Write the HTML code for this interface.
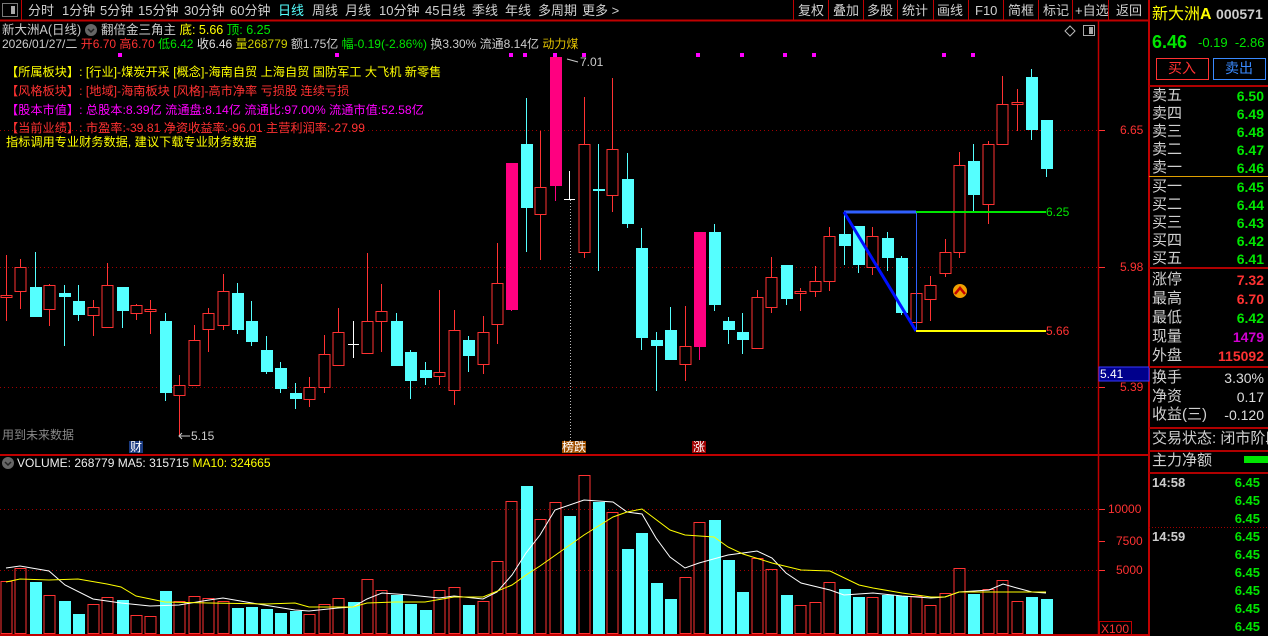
<!DOCTYPE html>
<html><head><meta charset="utf-8"><style>
*{margin:0;padding:0;box-sizing:border-box}
body{width:1268px;height:636px;background:#000;overflow:hidden;position:relative;font-family:"Liberation Sans","Noto Sans CJK SC",sans-serif;color:#c8c8c8}
.a{position:absolute;white-space:nowrap;line-height:1}
.tb{font-size:13px;top:4px;color:#d0d0d0}
.r{color:#ff3232}.g{color:#00e600}.y{color:#ffff00}.m{color:#ff00ff}.w{color:#e0e0e0}.c{color:#55ffff}
.rp{font-size:15px;color:#d0d0d0;left:1152px}
.rv{font-size:14px;font-weight:bold;right:4px;text-align:right}
.hl{position:absolute;left:1149px;width:119px;height:2px;background:#b00000}
</style></head><body>
<svg width="1268" height="636" style="position:absolute;left:0;top:0">
<line x1="0" y1="20.5" x2="1149" y2="20.5" stroke="#c00000" stroke-width="2"/>
<rect x="2.5" y="3.5" width="15" height="13" fill="none" stroke="#777" />
<rect x="11" y="6" width="4" height="8" fill="#aaa"/>
<line x1="21.5" y1="0" x2="21.5" y2="20" stroke="#c00000"/>
<g stroke="#c00000"><line x1="793.5" y1="0" x2="793.5" y2="20"/><line x1="828.5" y1="0" x2="828.5" y2="20"/><line x1="863.5" y1="0" x2="863.5" y2="20"/><line x1="897.5" y1="0" x2="897.5" y2="20"/><line x1="933.5" y1="0" x2="933.5" y2="20"/><line x1="968.5" y1="0" x2="968.5" y2="20"/><line x1="1003.5" y1="0" x2="1003.5" y2="20"/><line x1="1038.5" y1="0" x2="1038.5" y2="20"/><line x1="1072.5" y1="0" x2="1072.5" y2="20"/><line x1="1108.5" y1="0" x2="1108.5" y2="20"/></g>
<line x1="1098.5" y1="20" x2="1098.5" y2="636" stroke="#c00000" stroke-width="1.5"/>
<line x1="1149" y1="0" x2="1149" y2="636" stroke="#c00000" stroke-width="2"/>
<line x1="0" y1="455" x2="1149" y2="455" stroke="#c00000" stroke-width="2"/>
<line x1="0" y1="635" x2="1149" y2="635" stroke="#c00000" stroke-width="2"/>
<g stroke="#a00000" stroke-dasharray="1,3"><line x1="0" y1="130.5" x2="1098" y2="130.5"/><line x1="0" y1="267.5" x2="1098" y2="267.5"/><line x1="0" y1="387.5" x2="1098" y2="387.5"/><line x1="0" y1="509.5" x2="1098" y2="509.5"/><line x1="0" y1="570.5" x2="1098" y2="570.5"/></g>
<g stroke="#ff3232"><line x1="1099" y1="130.5" x2="1105" y2="130.5"/><line x1="1099" y1="267.5" x2="1105" y2="267.5"/><line x1="1099" y1="387.5" x2="1105" y2="387.5"/><line x1="1099" y1="509.5" x2="1105" y2="509.5"/><line x1="1099" y1="541.5" x2="1105" y2="541.5"/><line x1="1099" y1="570.5" x2="1105" y2="570.5"/></g>
<line x1="570.5" y1="200" x2="570.5" y2="455" stroke="#bbb" stroke-dasharray="1,2"/>
<rect x="1099" y="367" width="50" height="14" fill="#00008c" stroke="#3a3aff"/>
<rect x="1099.5" y="621.5" width="32" height="14" fill="none" stroke="#c00000"/>
<g id="cd"></g>
<g id="vb"></g>
<polyline fill="none" stroke="#fff" stroke-width="1" points="6,568 20,566 49,571 65,585 93,599 121,603 150,606 179,605 209,600 223,598 252,603 295,610 309,611 338,608 353,607 367,599 382,593 410,595 439,598 454,596 483,599 497,592 512,575 526,553 540,535 555,510 584,500 613,502 627,512 642,514 656,538 670,557 685,568 699,563 728,555 743,553 757,551 772,558 786,573 801,583 830,590 844,595 873,593 902,596 931,598 945,597 959,592 974,591 989,590 1003,584 1017,588 1032,592 1046,593"/>
<polyline fill="none" stroke="#ffff00" stroke-width="1" points="6,582 20,579 49,580 78,579 107,584 121,587 136,596 165,602 209,603 266,604 295,603 309,607 353,607 367,603 396,602 425,602 454,597 483,597 512,585 526,575 540,566 584,535 613,517 627,512 642,509 670,530 685,535 714,537 728,547 743,554 772,563 801,570 830,571 859,585 873,588 902,593 931,597 945,597 959,592 1003,592 1046,592"/>
<line x1="844" y1="212" x2="916" y2="212" stroke="#3060ff" stroke-width="3"/>
<line x1="916.5" y1="212" x2="916.5" y2="331" stroke="#3060ff" stroke-width="1"/>
<line x1="844" y1="212" x2="916" y2="331" stroke="#0010ff" stroke-width="3"/>
<line x1="916" y1="212" x2="1046" y2="212" stroke="#00e600" stroke-width="2"/>
<line x1="916" y1="331" x2="1046" y2="331" stroke="#ffff00" stroke-width="2"/>
<circle cx="960" cy="291" r="7" fill="#f0a000"/><path d="M955 294 L960 288 L965 294" fill="none" stroke="#c00000" stroke-width="2.5"/>
<g fill="#ff00ff"><rect x="118" y="53" width="4" height="4"/><rect x="335" y="53" width="4" height="4"/><rect x="509" y="53" width="4" height="4"/><rect x="523" y="53" width="4" height="4"/><rect x="553" y="53" width="4" height="4"/><rect x="582" y="53" width="4" height="4"/><rect x="696" y="53" width="4" height="4"/><rect x="740" y="53" width="4" height="4"/><rect x="783" y="53" width="4" height="4"/><rect x="812" y="53" width="4" height="4"/><rect x="942" y="53" width="4" height="4"/><rect x="971" y="53" width="4" height="4"/></g>
<path d="M1070 26 L1075 31 L1070 36 L1065 31 Z" fill="none" stroke="#bbb"/>
<rect x="1083.5" y="25.5" width="11" height="10" fill="none" stroke="#aaa"/><rect x="1089" y="27" width="4" height="7" fill="#aaa"/>
<circle cx="91" cy="30" r="6" fill="#666"/><path d="M88 29 L91 32 L94 29" stroke="#222" fill="none" stroke-width="1.5"/>
<circle cx="8" cy="463" r="6" fill="#666"/><path d="M5 462 L8 465 L11 462" stroke="#222" fill="none" stroke-width="1.5"/>
<line x1="180" y1="436" x2="190" y2="436" stroke="#ccc"/><path d="M182 433 L179 436 L182 439" fill="none" stroke="#ccc"/>
<line x1="567" y1="59" x2="578" y2="62" stroke="#ccc"/>
<rect x="1244" y="456" width="24" height="7" fill="#00e600"/>
<line x1="1149" y1="527.5" x2="1268" y2="527.5" stroke="#a00000" stroke-dasharray="1,2"/>
<rect x="1156.5" y="58.5" width="52" height="21" fill="none" stroke="#ff3232"/>
<rect x="1213.5" y="58.5" width="52" height="21" fill="none" stroke="#3a8aff"/>
<line x1="1149" y1="176.5" x2="1268" y2="176.5" stroke="#e0a000"/>
</svg>
<div class="hl" style="top:85px"></div><div class="hl" style="top:267px"></div><div class="hl" style="top:366px"></div><div class="hl" style="top:427px"></div><div class="hl" style="top:450px"></div><div class="hl" style="top:472px"></div>

<div class="a tb" style="left:28px">分时</div><div class="a tb" style="left:62px">1分钟</div><div class="a tb" style="left:100px">5分钟</div><div class="a tb" style="left:138px">15分钟</div><div class="a tb" style="left:184px">30分钟</div><div class="a tb" style="left:230px">60分钟</div><div class="a tb" style="left:278px;color:#55ffff">日线</div><div class="a tb" style="left:312px">周线</div><div class="a tb" style="left:345px">月线</div><div class="a tb" style="left:379px">10分钟</div><div class="a tb" style="left:425px">45日线</div><div class="a tb" style="left:472px">季线</div><div class="a tb" style="left:505px">年线</div><div class="a tb" style="left:538px">多周期</div><div class="a tb" style="left:582px">更多 &gt;</div>
<div class="a tb" style="left:798px">复权</div><div class="a tb" style="left:833px">叠加</div><div class="a tb" style="left:867px">多股</div><div class="a tb" style="left:902px">统计</div><div class="a tb" style="left:937px">画线</div><div class="a tb" style="left:975px">F10</div><div class="a tb" style="left:1008px">简框</div><div class="a tb" style="left:1043px">标记</div><div class="a tb" style="left:1075px">+自选</div><div class="a tb" style="left:1116px">返回</div>

<div class="a" style="left:2px;top:24px;font-size:12.5px;color:#ccc">新大洲A(日线)</div>
<div class="a" style="left:101px;top:24px;font-size:12.5px;color:#ccc">翻倍金三角主 <span class="y">底: 5.66</span> <span class="g">顶: 6.25</span></div>
<div class="a" style="left:2px;top:38px;font-size:12px;color:#ccc">2026/01/27/二 <span class="r">开6.70 高6.70</span> <span class="g">低6.42</span> <span class="w">收6.46</span> <span style="color:#d0d000">量268779</span> 额1.75亿 <span class="g">幅-0.19(-2.86%)</span> 换3.30% 流通8.14亿 <span style="color:#e0c000">动力煤</span></div>
<div class="a y" style="left:6px;top:66px;font-size:12.2px">【所属板块】: [行业]-煤炭开采 [概念]-海南自贸 上海自贸 国防军工 大飞机 新零售</div>
<div class="a r" style="left:6px;top:85px;font-size:12.2px">【风格板块】: [地域]-海南板块 [风格]-高市净率 亏损股 连续亏损</div>
<div class="a m" style="left:6px;top:104px;font-size:12.2px">【股本市值】: 总股本:8.39亿 流通盘:8.14亿 流通比:97.00% 流通市值:52.58亿</div>
<div class="a r" style="left:6px;top:122px;font-size:12.2px">【当前业绩】: 市盈率:-39.81 净资收益率:-96.01 主营利润率:-27.99</div>
<div class="a y" style="left:6px;top:136px;font-size:12.2px">指标调用专业财务数据, 建议下载专业财务数据</div>
<div class="a" style="left:2px;top:429px;font-size:12px;color:#888">用到未来数据</div>
<div class="a" style="left:191px;top:430px;font-size:12px;color:#ccc">5.15</div>
<div class="a" style="left:580px;top:56px;font-size:12px;color:#ccc">7.01</div>
<div class="a" style="left:129px;top:441px;font-size:12px;color:#fff;background:#1a3a80;padding:0 1px">财</div>
<div class="a" style="left:562px;top:441px;font-size:12px;color:#fff;background:#a05000">榜跌</div>
<div class="a" style="left:692px;top:441px;font-size:12px;color:#fff;background:#a00000;padding:0 1px">涨</div>
<div class="a g" style="left:1046px;top:206px;font-size:12px">6.25</div>
<div class="a r" style="left:1046px;top:325px;font-size:12px">5.66</div>
<div class="a r" style="left:1120px;top:124px;font-size:12px">6.65</div>
<div class="a r" style="left:1120px;top:261px;font-size:12px">5.98</div>
<div class="a" style="left:1100px;top:368px;font-size:12px;color:#fff">5.41</div>
<div class="a r" style="left:1120px;top:381px;font-size:12px">5.39</div>
<div class="a r" style="left:1108px;top:503px;font-size:12px">10000</div>
<div class="a r" style="left:1116px;top:535px;font-size:12px">7500</div>
<div class="a r" style="left:1116px;top:564px;font-size:12px">5000</div>
<div class="a r" style="left:1101px;top:623px;font-size:12px">X100</div>
<div class="a" style="left:17px;top:457px;font-size:12px;color:#eee">VOLUME: 268779 MA5: 315715 <span class="y">MA10: 324665</span></div>

<div class="a" style="left:1152px;top:7px;font-size:16px"><span class="y">新大洲</span><span class="y" style="font-weight:bold">A</span> <span style="color:#ccc;font-weight:bold;font-size:14px">000571</span></div>
<div class="a g" style="left:1152px;top:33px;font-size:18px;font-weight:bold">6.46</div>
<div class="a g" style="left:1198px;top:36px;font-size:13px">-0.19 &nbsp;-2.86</div>
<div class="a r" style="left:1168px;top:61px;font-size:14px">买入</div>
<div class="a" style="left:1225px;top:61px;font-size:14px;color:#3a8aff">卖出</div>
<div class="a rp" style="top:88px">卖五</div><div class="a rv g" style="top:89px">6.50</div>
<div class="a rp" style="top:106px">卖四</div><div class="a rv g" style="top:107px">6.49</div>
<div class="a rp" style="top:124px">卖三</div><div class="a rv g" style="top:125px">6.48</div>
<div class="a rp" style="top:142px">卖二</div><div class="a rv g" style="top:143px">6.47</div>
<div class="a rp" style="top:160px">卖一</div><div class="a rv g" style="top:161px">6.46</div>
<div class="a rp" style="top:179px">买一</div><div class="a rv g" style="top:180px">6.45</div>
<div class="a rp" style="top:197px">买二</div><div class="a rv g" style="top:198px">6.44</div>
<div class="a rp" style="top:215px">买三</div><div class="a rv g" style="top:216px">6.43</div>
<div class="a rp" style="top:233px">买四</div><div class="a rv g" style="top:234px">6.42</div>
<div class="a rp" style="top:251px">买五</div><div class="a rv g" style="top:252px">6.41</div>
<div class="a rp" style="top:272px">涨停</div><div class="a rv r" style="top:273px">7.32</div>
<div class="a rp" style="top:291px">最高</div><div class="a rv r" style="top:292px">6.70</div>
<div class="a rp" style="top:310px">最低</div><div class="a rv g" style="top:311px">6.42</div>
<div class="a rp" style="top:329px">现量</div><div class="a rv" style="top:330px;color:#d000d0">1479</div>
<div class="a rp" style="top:348px">外盘</div><div class="a rv r" style="top:349px">115092</div>
<div class="a rp" style="top:370px">换手</div><div class="a rv" style="top:371px;color:#ddd;font-weight:normal">3.30%</div>
<div class="a rp" style="top:389px">净资</div><div class="a rv" style="top:390px;color:#ddd;font-weight:normal">0.17</div>
<div class="a rp" style="top:407px">收益(三)</div><div class="a rv" style="top:408px;color:#ddd;font-weight:normal">-0.120</div>
<div class="a rp" style="top:431px">交易状态: 闭市阶段</div>
<div class="a rp" style="top:453px">主力净额</div>
<div class="a" style="left:1152px;top:476px;font-size:13px;font-weight:bold;color:#ccc">14:58</div>
<div class="a" style="left:1152px;top:530px;font-size:13px;font-weight:bold;color:#ccc">14:59</div>
<div id="tk"></div>
<script>
var C=[[295,297,255,321,'r'],[267,291,259,309,'r'],[287,317,252,317,'c'],[285,309,284,326,'r'],[293,297,285,346,'c'],[301,315,285,321,'c'],[307,315,300,336,'r'],[285,327,263,328,'r'],[287,311,287,328,'c'],[305,313,304,320,'r'],[309,311,300,334,'r'],[321,393,313,401,'c'],[385,395,375,436,'r'],[340,385,325,385,'r'],[313,329,308,352,'r'],[291,325,274,330,'r'],[293,330,283,334,'c'],[321,342,301,346,'c'],[350,372,336,374,'c'],[368,389,362,393,'c'],[393,399,383,409,'c'],[387,399,377,407,'r'],[354,387,335,393,'r'],[332,365,308,366,'r'],[344,344,321,358,'w'],[321,353,253,353,'r'],[311,321,284,352,'r'],[321,366,313,366,'c'],[352,381,350,399,'c'],[370,378,362,385,'c'],[372,376,290,385,'r'],[330,390,310,405,'r'],[340,356,336,372,'c'],[332,364,316,374,'r'],[283,324,243,344,'r'],[163,310,163,311,'m'],[144,208,98,252,'c'],[187,214,131,260,'r'],[57,186,57,201,'m'],[199,199,171,200,'w'],[144,252,97,258,'r'],[189,190,144,271,'c'],[149,195,78,212,'r'],[179,224,153,228,'c'],[248,338,228,350,'c'],[340,346,332,391,'c'],[330,360,307,360,'c'],[346,364,306,381,'r'],[232,347,232,360,'m'],[232,305,224,311,'c'],[321,330,317,344,'c'],[332,340,313,354,'c'],[297,348,290,348,'r'],[277,307,257,313,'r'],[265,299,265,305,'c'],[291,293,288,311,'r'],[281,291,266,297,'r'],[236,281,227,291,'r'],[234,246,212,265,'c'],[226,265,226,273,'c'],[236,267,227,275,'r'],[238,258,232,271,'c'],[258,313,256,315,'c'],[293,322,293,322,'r'],[285,299,276,321,'r'],[252,273,239,277,'r'],[165,252,152,258,'r'],[161,195,144,211,'c'],[144,204,141,224,'r'],[104,144,76,144,'r'],[102,104,89,131,'r'],[77,130,69,140,'c'],[120,169,120,177,'c']];
var V=[581,568,582,595,601,614,604,597,600,615,616,591,601,596,598,601,608,607,609,613,611,614,604,598,602,579,590,595,604,610,590,587,605,601,561,501,486,519,502,516,475,502,512,549,533,583,599,577,522,520,560,592,558,569,595,605,602,582,589,597,597,595,596,596,605,593,568,594,589,580,601,597,599];
var VT="rrcrccrrcr"+"rcrrrrcccc"+"crrrcrrccc"+"rrcrrrcrrc"+"rcrccccrrc"+"ccrrcrrrcc"+"rccrrrrcrr"+"rcc";
var COL={r:'#ff3232',c:'#55ffff',m:'#ff0080',w:'#ffffff'};
var s='';
C.forEach(function(d,i){var x=Math.round(6+i*14.44),col=COL[d[4]];
s+='<line x1="'+(x+.5)+'" y1="'+d[2]+'" x2="'+(x+.5)+'" y2="'+d[3]+'" stroke="'+col+'"/>';
var h=Math.max(d[1]-d[0],1);
if(d[4]=='r')s+='<rect x="'+(x-5)+'" y="'+(d[0]+.5)+'" width="11" height="'+Math.max(h,2)+'" fill="#000" stroke="'+col+'"/>';
else if(d[4]=='w')s+='<line x1="'+(x-5)+'" y1="'+(d[0]+.5)+'" x2="'+(x+6)+'" y2="'+(d[0]+.5)+'" stroke="#fff"/>';
else s+='<rect x="'+(x-5)+'" y="'+d[0]+'" width="12" height="'+Math.max(h,2)+'" fill="'+col+'"/>';});
document.getElementById('cd').innerHTML=s;
s='';
V.forEach(function(t,i){var x=Math.round(6+i*14.44),ty=VT[i]||'c';
if(ty=='r')s+='<rect x="'+(x-5)+'" y="'+(t+.5)+'" width="11" height="'+(633-t)+'" fill="none" stroke="#ff3232"/>';
else s+='<rect x="'+(x-5)+'" y="'+t+'" width="12" height="'+(634-t)+'" fill="#55ffff"/>';});
document.getElementById('vb').innerHTML=s;
s='';
for(var k=0;k<9;k++)s+='<div class="a g" style="right:8px;top:'+(476+k*18)+'px;font-size:13px;font-weight:bold">6.45</div>';
document.getElementById('tk').innerHTML=s;
</script>
</body></html>
